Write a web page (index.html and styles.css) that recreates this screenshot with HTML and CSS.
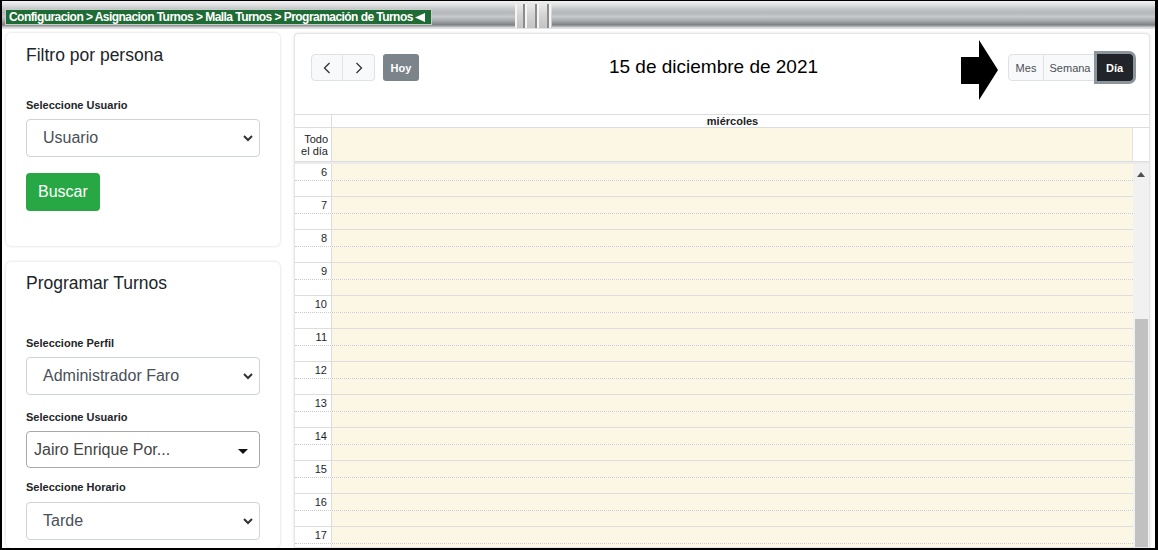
FILE: index.html
```html
<!DOCTYPE html>
<html lang="es">
<head>
<meta charset="utf-8">
<title>Programación de Turnos</title>
<link rel="stylesheet" href="styles.css">
</head>
<body>
<div class="frame">
  <header class="topbar">
    <div class="crumb"><span class="crumb-text">Configuracion &gt; Asignacion Turnos &gt; Malla Turnos &gt; Programación de Turnos</span><svg class="crumb-tri" width="10" height="9" viewBox="0 0 10 9"><polygon points="10,0 10,9 0,4.5" fill="#fff"/></svg></div>
    <div class="grip"><span></span><span></span><span></span></div>
  </header>
  <div class="content">
    <aside class="sidebar">
      <section class="card card-filter">
        <h2 class="card-title">Filtro por persona</h2>
        <label class="field-label lbl-first">Seleccione Usuario</label>
        <div class="select"><span>Usuario</span><svg class="chev" width="10" height="7" viewBox="0 0 10 7"><polyline points="1,1 5,5 9,1" fill="none" stroke="#333" stroke-width="2"/></svg></div>
        <button class="btn-buscar">Buscar</button>
      </section>
      <section class="card card-prog">
        <h2 class="card-title">Programar Turnos</h2>
        <label class="field-label lbl-first">Seleccione Perfil</label>
        <div class="select"><span>Administrador Faro</span><svg class="chev" width="10" height="7" viewBox="0 0 10 7"><polyline points="1,1 5,5 9,1" fill="none" stroke="#333" stroke-width="2"/></svg></div>
        <label class="field-label">Seleccione Usuario</label>
        <div class="select2"><span>Jairo Enrique Por...</span><svg class="caret" width="10" height="5" viewBox="0 0 10 5"><polygon points="0,0 10,0 5,5" fill="#111"/></svg></div>
        <label class="field-label lbl-last">Seleccione Horario</label>
        <div class="select"><span>Tarde</span><svg class="chev" width="10" height="7" viewBox="0 0 10 7"><polyline points="1,1 5,5 9,1" fill="none" stroke="#333" stroke-width="2"/></svg></div>
      </section>
    </aside>
    <main class="calendar">
      <div class="toolbar">
        <div class="tb-left">
          <div class="btn-group">
            <button class="btn-nav"><svg width="8" height="12" viewBox="0 0 8 12"><polyline points="6.5,1 1.5,6 6.5,11" fill="none" stroke="#333" stroke-width="1.3"/></svg></button>
            <button class="btn-nav"><svg width="8" height="12" viewBox="0 0 8 12"><polyline points="1.5,1 6.5,6 1.5,11" fill="none" stroke="#333" stroke-width="1.3"/></svg></button>
          </div>
          <button class="btn-hoy">Hoy</button>
        </div>
        <h1 class="cal-title">15 de diciembre de 2021</h1>
        <div class="btn-group views">
          <button class="btn-view">Mes</button>
          <button class="btn-view">Semana</button>
          <button class="btn-view active">Día</button>
        </div>
      </div>
      <svg class="pointer" width="38" height="60" viewBox="0 0 38 60"><polygon points="0,17 18,17 18,0 37,30 18,60 18,44 0,44" fill="#000"/></svg>
      <div class="grid">
        <div class="head-row">
          <div class="gutter"></div>
          <div class="day-head">miércoles</div>
          <div class="sb-space"></div>
        </div>
        <div class="allday-row">
          <div class="gutter allday-label">Todo<br>el día</div>
          <div class="lane"></div>
          <div class="sb-space"></div>
        </div>
        <div class="divider"></div>
        <div class="body">
          <div class="rows">
            <div class="hour"><div class="half"><span class="time">6</span><span class="lane"></span></div><div class="half"><span class="time"></span><span class="lane"></span></div></div>
            <div class="hour"><div class="half"><span class="time">7</span><span class="lane"></span></div><div class="half"><span class="time"></span><span class="lane"></span></div></div>
            <div class="hour"><div class="half"><span class="time">8</span><span class="lane"></span></div><div class="half"><span class="time"></span><span class="lane"></span></div></div>
            <div class="hour"><div class="half"><span class="time">9</span><span class="lane"></span></div><div class="half"><span class="time"></span><span class="lane"></span></div></div>
            <div class="hour"><div class="half"><span class="time">10</span><span class="lane"></span></div><div class="half"><span class="time"></span><span class="lane"></span></div></div>
            <div class="hour"><div class="half"><span class="time">11</span><span class="lane"></span></div><div class="half"><span class="time"></span><span class="lane"></span></div></div>
            <div class="hour"><div class="half"><span class="time">12</span><span class="lane"></span></div><div class="half"><span class="time"></span><span class="lane"></span></div></div>
            <div class="hour"><div class="half"><span class="time">13</span><span class="lane"></span></div><div class="half"><span class="time"></span><span class="lane"></span></div></div>
            <div class="hour"><div class="half"><span class="time">14</span><span class="lane"></span></div><div class="half"><span class="time"></span><span class="lane"></span></div></div>
            <div class="hour"><div class="half"><span class="time">15</span><span class="lane"></span></div><div class="half"><span class="time"></span><span class="lane"></span></div></div>
            <div class="hour"><div class="half"><span class="time">16</span><span class="lane"></span></div><div class="half"><span class="time"></span><span class="lane"></span></div></div>
            <div class="hour"><div class="half"><span class="time">17</span><span class="lane"></span></div><div class="half"><span class="time"></span><span class="lane"></span></div></div>
          </div>
          <div class="scrollbar">
            <svg class="sb-up" width="8" height="5" viewBox="0 0 8 5"><polygon points="0,5 8,5 4,0" fill="#505050"/></svg>
            <div class="sb-thumb"></div>
          </div>
        </div>
      </div>
    </main>
  </div>
</div>
</body>
</html>
```

FILE: styles.css
```css
* { box-sizing: border-box; }
html, body { margin: 0; padding: 0; background: #fff; }
body { font-family: "Liberation Sans", Arial, sans-serif; color: #212529; }

.frame {
  width: 1158px;
  height: 550px;
  border-style: solid;
  border-color: #000;
  border-width: 1px 3px 2px 2px;
  overflow: hidden;
  display: flex;
  flex-direction: column;
  background: #fff;
}

/* ---------- top bar ---------- */
.topbar {
  height: 28px;
  flex: none;
  display: flex;
  align-items: flex-start;
  padding-left: 3px;
  background: linear-gradient(to bottom,
    #f2f2f2 0%, #e3e4e5 12%, #c4c7c9 28%, #b5b8bb 42%, #c6c8ca 56%,
    #a9acaf 70%, #818487 84%, #9a9da0 89%, #d3d4d5 94%, #e8e9ea 100%);
}
.crumb {
  margin-top: 8px;
  height: 16px;
  width: 427px;
  background: #1f6b35;
  border: 1px solid #c6cdc6;
  display: flex;
  align-items: center;
  padding-left: 3px;
  color: #fff;
  font-weight: bold;
  font-size: 12px;
  white-space: nowrap;
  overflow: hidden;
}
.crumb-text {
  display: inline-block;
  letter-spacing: -0.55px;
}
.crumb-tri { margin-left: 2px; flex: none; }

.grip {
  margin-left: 83px;
  margin-top: 3px;
  width: 37px;
  height: 24px;
  display: flex;
  gap: 8px;
  padding-left: 6px;
  background: linear-gradient(to bottom, #e9e9e9, #d2d2d2 50%, #c4c4c4);
  border-left: 2px solid #f4f4f4;
}
.grip span {
  width: 4px;
  height: 100%;
  background: linear-gradient(to right, #8c8c8c 0, #8c8c8c 2px, #f5f5f5 2px);
}

/* ---------- content ---------- */
.content {
  flex: 1;
  display: flex;
  gap: 14px;
  padding: 4px 5px 0 4px;
  min-height: 0;
}

.sidebar {
  width: 274px;
  flex: none;
  display: flex;
  flex-direction: column;
  gap: 16px;
}
.card {
  background: #fff;
  border-radius: 5px;
  box-shadow: 0 0 3px rgba(0,0,0,0.18);
  padding: 12px 20px 0 20px;
  display: flex;
  flex-direction: column;
}
.card-filter { height: 213px; }
.card-prog { flex: 1; padding-top: 11px; }

.card-title {
  margin: 0;
  font-size: 17.5px;
  line-height: 21px;
  font-weight: normal;
  color: #212529;
}
.field-label {
  font-size: 11px;
  font-weight: bold;
  line-height: 13px;
  color: #212529;
  margin-top: 16px;
  margin-bottom: 7px;
}
.card-filter .lbl-first { margin-top: 33px; }
.card-prog .lbl-first { margin-top: 43px; margin-bottom: 6px; }
.card-prog .field-label { margin-bottom: 7px; }
.card-prog .lbl-last { margin-top: 13px; margin-bottom: 8px; }

.select {
  height: 38px;
  border: 1px solid #ced4da;
  border-radius: 4px;
  display: flex;
  align-items: center;
  padding: 0 6px 0 16px;
  font-size: 16px;
  color: #495057;
  flex: none;
}
.select span { flex: 1; }
.chev { flex: none; }

.select2 {
  height: 37px;
  border: 1px solid #a9a9a9;
  border-radius: 4px;
  display: flex;
  align-items: center;
  padding: 0 11px 0 7px;
  font-size: 16px;
  color: #444;
  flex: none;
}
.select2 span { flex: 1; }
.caret { flex: none; margin-top: 3px; }

.btn-buscar {
  align-self: flex-start;
  margin-top: 16px;
  height: 38px;
  padding: 0 12px;
  border: 0;
  border-radius: 4px;
  background: #28a745;
  color: #fff;
  font-family: inherit;
  font-size: 16px;
}

/* ---------- calendar ---------- */
.calendar {
  position: relative;
  width: 856px;
  flex: none;
  background: #fff;
  border: 1px solid #e3e5e8;
  border-radius: 4px 4px 0 0;
  box-shadow: 0 0 3px rgba(0,0,0,0.12);
  display: flex;
  flex-direction: column;
  min-height: 0;
}
.toolbar {
  height: 80px;
  flex: none;
  display: flex;
  justify-content: space-between;
  align-items: flex-start;
  padding: 20px 16px 0 16px;
}
.tb-left { display: flex; gap: 8px; }
.btn-group { display: flex; }
.btn-nav, .btn-view {
  height: 27px;
  background: #f8f9fa;
  border: 1px solid #dee2e6;
  font-family: inherit;
  padding: 0;
  display: flex;
  align-items: center;
  justify-content: center;
}
.btn-nav { width: 32px; }
.btn-nav + .btn-nav { border-left: 0; width: 32px; }
.btn-nav:first-child { border-radius: 4px 0 0 4px; }
.btn-nav:last-child { border-radius: 0 4px 4px 0; }
.btn-hoy {
  width: 36px;
  height: 27px;
  border: 0;
  border-radius: 3px;
  background: #7b838b;
  color: #fff;
  font-family: inherit;
  font-weight: bold;
  font-size: 11px;
  padding: 0;
}
.cal-title {
  margin: 2px 0 0 0;
  font-size: 19px;
  line-height: 22px;
  font-weight: normal;
  color: #000;
}
.views { position: relative; }
.btn-view {
  font-size: 11px;
  color: #4a4f55;
  padding: 0 6px;
}
.btn-view + .btn-view { border-left: 0; }
.btn-view:first-child { border-radius: 4px 0 0 4px; width: 36px; }
.btn-view:nth-child(2) { width: 53px; }
.btn-view.active {
  width: 36px;
  background: #212529;
  border-color: #212529;
  color: #fff;
  font-weight: bold;
  border-radius: 0 4px 4px 0;
  box-shadow: 0 0 0 3px #8d959c;
  position: relative;
}
.pointer {
  position: absolute;
  left: 666px;
  top: 6px;
}

.grid {
  flex: 1;
  display: flex;
  flex-direction: column;
  min-height: 0;
}
.head-row {
  height: 14px;
  flex: none;
  display: flex;
  border-top: 1px solid #dddddd;
  border-bottom: 1px solid #dddddd;
}
.gutter {
  width: 37px;
  flex: none;
  border-right: 1px solid #dddddd;
}
.day-head {
  flex: 1;
  text-align: center;
  font-size: 11px;
  font-weight: bold;
  line-height: 12px;
  color: #222;
}
.sb-space { width: 16px; flex: none; }
.allday-row {
  height: 33px;
  flex: none;
  display: flex;
}
.allday-label {
  text-align: right;
  font-size: 11px;
  line-height: 12px;
  padding: 5px 3px 0 0;
  color: #222;
}
.allday-row .lane { flex: 1; background: #fcf7e4; border-right: 1px solid #e4e4e4; }
.divider {
  height: 3px;
  flex: none;
  border-top: 1px solid #dcdcdc;
  background: #ebebeb;
}
.body {
  flex: 1;
  display: flex;
  min-height: 0;
  overflow: hidden;
}
.rows { flex: 1; }
.half {
  display: flex;
  height: 17px;
  border-bottom: 1px dotted #c8c8c8;
}
.half + .half {
  height: 16px;
  border-bottom: 1px solid #dddddd;
}
.time {
  width: 37px;
  flex: none;
  border-right: 1px solid #dddddd;
  text-align: right;
  padding: 2px 4px 0 0;
  font-size: 11px;
  line-height: 13px;
  color: #1e1e2e;
  overflow: visible;
  white-space: nowrap;
}
.half .lane { flex: 1; background: #fcf7e4; }
.scrollbar {
  width: 16px;
  flex: none;
  background: #f1f1f1;
  display: flex;
  flex-direction: column;
  align-items: center;
}
.sb-up { margin-top: 8px; flex: none; }
.sb-thumb {
  margin-top: 142px;
  width: 13px;
  flex: 1;
  background: #c1c1c1;
}
```
